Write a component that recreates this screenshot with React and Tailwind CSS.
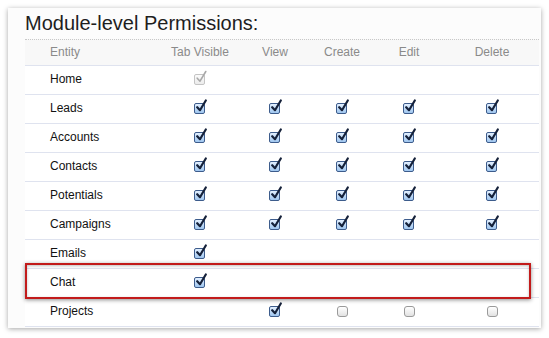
import React from "react";

const rows = [
  { name: "Home", cells: ["disabled", null, null, null, null] },
  { name: "Leads", cells: ["on", "on", "on", "on", "on"] },
  { name: "Accounts", cells: ["on", "on", "on", "on", "on"] },
  { name: "Contacts", cells: ["on", "on", "on", "on", "on"] },
  { name: "Potentials", cells: ["on", "on", "on", "on", "on"] },
  { name: "Campaigns", cells: ["on", "on", "on", "on", "on"] },
  { name: "Emails", cells: ["on", null, null, null, null] },
  { name: "Chat", cells: ["on", null, null, null, null] },
  { name: "Projects", cells: [null, "on", "off", "off", "off"] },
];

const headers = ["Tab Visible", "View", "Create", "Edit", "Delete"];

function Check({ state }) {
  if (!state) return null;
  if (state === "off") {
    return (
      <span className="block w-[11px] h-[11px] rounded-[3px] border border-[#9a9a9a] bg-gradient-to-b from-[#ffffff] to-[#e2e2e2]" />
    );
  }
  const disabled = state === "disabled";
  return (
    <span className="relative block w-[12px] h-[12px]">
      <span
        className={
          disabled
            ? "absolute left-0 top-[1px] w-[11px] h-[11px] rounded-[2px] border border-[#c4c4c4] bg-gradient-to-b from-[#fbfbfb] to-[#ececec]"
            : "absolute left-0 top-[1px] w-[11px] h-[11px] rounded-[2px] border border-[#3d5c8c] bg-gradient-to-b from-[#e3f0ff] to-[#9fc6ef]"
        }
      />
      <svg
        className="absolute left-[1px] top-[-3px]"
        width="13"
        height="14"
        viewBox="0 0 13 14"
      >
        <path
          d="M2.2 8.2 L5 11.2 L10.8 1.5"
          fill="none"
          stroke={disabled ? "#a8a8a8" : "#15213a"}
          strokeWidth={disabled ? "1.6" : "2.2"}
          strokeLinecap="round"
          strokeLinejoin="round"
        />
      </svg>
    </span>
  );
}

const gridCols = "grid grid-cols-[135px_80px_70px_64px_70px_96px]";

export default function App() {
  return (
    <div
      className="w-[549px] h-[338px] bg-white pt-[8px] pl-[8px]"
      style={{ fontFamily: '"Liberation Sans", Arial, sans-serif' }}
    >
      <div className="relative w-[533px] h-[320px] bg-[#fcfcfc] shadow-[0_1px_5px_rgba(0,0,0,0.35)] pl-[17px] pr-[2px]">
        <div className="h-[31px] pt-[3px] text-[20px] leading-[24px] text-[#1e1e1e]">
          Module-level Permissions:
        </div>
        <div className="border-t border-dotted border-[#c8c8c8] bg-[#f8f8f8]">
          <div className={`${gridCols} h-[25px] items-center pb-[2px] text-[12px] text-[#8a8a8a]`}>
            <div className="pl-[25px]">Entity</div>
            {headers.map((h) => (
              <div key={h} className="text-center">
                {h}
              </div>
            ))}
          </div>
        </div>
        <div className="bg-white">
          {rows.map((r) => (
            <div
              key={r.name}
              className={`${gridCols} h-[29px] items-center pb-[2px] border-t border-[#dfe3ef] text-[12px] text-[#111]`}
            >
              <div className="pl-[25px]">{r.name}</div>
              {r.cells.map((c, i) => (
                <div key={i} className="flex justify-center">
                  <Check state={c} />
                </div>
              ))}
            </div>
          ))}
          <div className="border-t border-[#dfe3ef]" />
        </div>
        <div className="absolute left-[17px] top-[255px] w-[506px] h-[36px] border-2 border-[#c21b1b] shadow-[0_1px_4px_rgba(0,0,0,0.45),inset_0_1px_3px_rgba(0,0,0,0.25)]" />
      </div>
    </div>
  );
}
